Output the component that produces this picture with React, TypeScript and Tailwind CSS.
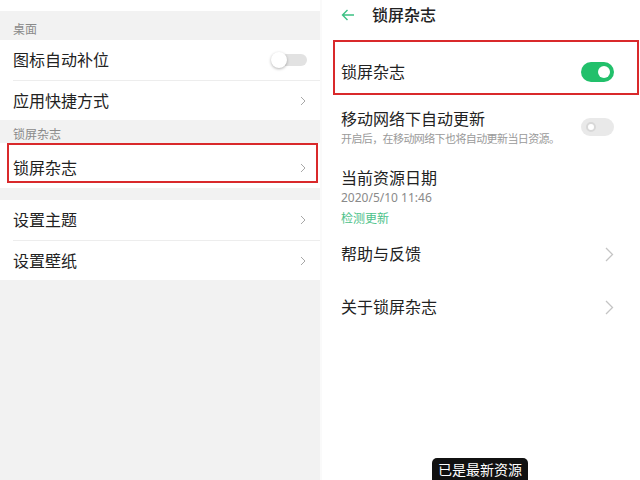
import React from "react";

const font = { fontFamily: '"Noto Sans", "Noto Sans CJK SC", sans-serif' };

function SmallChevron() {
  return (
    <svg width="6" height="10" viewBox="0 0 6 10" className="shrink-0">
      <path d="M1 1 L5 5 L1 9" fill="none" stroke="#a8a8a8" strokeWidth="1" />
    </svg>
  );
}

function BigChevron() {
  return (
    <svg width="9" height="15" viewBox="0 0 9 15" className="shrink-0">
      <path d="M1 1 L7.5 7.5 L1 14" fill="none" stroke="#c4c4c4" strokeWidth="1.3" />
    </svg>
  );
}

function LeftRow({ label, right, divider }: { label: string; right: React.ReactNode; divider?: boolean }) {
  return (
    <div className="bg-white">
      <div className="h-[40px] flex items-center justify-between pl-[13px] pr-[14px]">
        <span className="text-[16px] text-[#222]">{label}</span>
        {right}
      </div>
      {divider && <div className="h-px bg-[#ededed] ml-[13px]" />}
    </div>
  );
}

function OffToggle() {
  return (
    <div className="relative w-[36px] h-[18px] mr-[-1px]">
      <div className="absolute left-[6px] right-0 top-[3px] h-[12px] rounded-full bg-[#e2e2e2]" />
      <div className="absolute left-0 top-[1px] w-[16px] h-[16px] rounded-full bg-white shadow-[0_1px_3px_rgba(0,0,0,0.3)]" />
    </div>
  );
}

function LeftPanel() {
  return (
    <div className="w-[320px] h-full bg-[#f2f2f2] flex flex-col">
      <div className="h-[11px] bg-white" />
      <div className="h-[29px] flex items-end pb-[3px] pl-[13px] text-[12px] leading-[14px] text-[#8a8a8a]">桌面</div>
      <LeftRow label="图标自动补位" right={<OffToggle />} divider />
      <div className="bg-white h-[39px] flex items-center justify-between pl-[13px] pr-[14px]">
        <span className="text-[16px] text-[#222]">应用快捷方式</span>
        <SmallChevron />
      </div>
      <div className="h-[23px] flex items-end pb-px pl-[13px] text-[12px] leading-[14px] text-[#8a8a8a]">锁屏杂志</div>
      <div className="relative bg-white h-[45px] flex items-center justify-between pl-[13px] pr-[14px] pt-[5px]">
        <span className="text-[16px] text-[#222]">锁屏杂志</span>
        <SmallChevron />
        <div className="absolute left-[7px] top-0 w-[311px] h-[40px] border-2 border-[#d9292b]" />
      </div>
      <div className="h-[12px]" />
      <LeftRow label="设置主题" right={<SmallChevron />} divider />
      <div className="bg-white h-[39px] flex items-center justify-between pl-[13px] pr-[14px]">
        <span className="text-[16px] text-[#222]">设置壁纸</span>
        <SmallChevron />
      </div>
    </div>
  );
}

function RightPanel() {
  return (
    <div className="relative flex-1 h-full bg-white border-l-2 border-[#fafafa] flex flex-col pl-[19px] pr-[26px]">
      <div className="h-[29px] flex items-center">
        <svg width="14" height="12" viewBox="0 0 14 12" className="shrink-0">
          <path d="M13 6 H1.5 M6.5 1 L1.5 6 L6.5 11" fill="none" stroke="#3cc184" strokeWidth="1.4" />
        </svg>
        <span className="ml-[17px] text-[16px] font-medium text-[#222]">锁屏杂志</span>
      </div>
      <div className="relative mt-[11px] h-[55px] flex items-center justify-between pt-[9px]">
        <span className="text-[16px] text-[#222]">锁屏杂志</span>
        <div className="relative w-[33px] h-[20px] rounded-full bg-[#22c06b]">
          <div className="absolute right-[4px] top-[4px] w-[12px] h-[12px] rounded-full bg-white" />
        </div>
        <div className="absolute left-[-8px] right-[-25px] top-0 bottom-0 border-2 border-[#d9292b]" />
      </div>
      <div className="mt-[13px] flex items-center justify-between">
        <div className="flex flex-col">
          <span className="text-[16px] leading-[22px] text-[#222]">移动网络下自动更新</span>
          <span className="text-[11px] leading-[16px] mt-px tracking-[-0.6px] whitespace-nowrap text-[#9a9a9a]">
            开启后，在移动网络下也将自动更新当日资源。
          </span>
        </div>
        <div className="relative w-[33px] h-[18px] rounded-full bg-[#e9e9e9] mb-[1px]">
          <div className="absolute left-[5px] top-[4px] w-[10px] h-[10px] rounded-full bg-white border-2 border-[#d8d8d8]" />
        </div>
      </div>
      <div className="mt-[20px] flex flex-col">
        <span className="text-[16px] leading-[22px] text-[#222]">当前资源日期</span>
        <span className="text-[12px] leading-[16px] mt-px text-[#8a8a8a]">2020/5/10 11:46</span>
        <span className="text-[12px] leading-[16px] mt-[5px] text-[#4cc28a]">检测更新</span>
      </div>
      <div className="mt-[16px] h-[22px] flex items-center justify-between">
        <span className="text-[16px] text-[#222]">帮助与反馈</span>
        <BigChevron />
      </div>
      <div className="mt-[31px] h-[22px] flex items-center justify-between">
        <span className="text-[16px] text-[#222]">关于锁屏杂志</span>
        <BigChevron />
      </div>
      <div className="absolute left-[110px] top-[458px] w-[96px] h-[32px] rounded-[5px] bg-[#111] flex justify-center pt-[3px]">
        <span className="text-[14px] leading-[18px] text-white">已是最新资源</span>
      </div>
    </div>
  );
}

export default function App() {
  return (
    <div className="w-[640px] h-[480px] overflow-hidden flex" style={font}>
      <LeftPanel />
      <RightPanel />
    </div>
  );
}
